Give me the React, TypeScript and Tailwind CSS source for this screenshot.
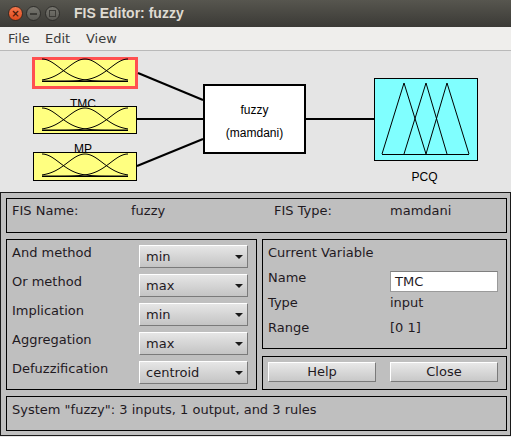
import React from "react";

const ink = "text-[#1f1a1f]";

// gaussian membership curves for an input box, x 42..128 in canvas coords
function mfPaths(top: number) {
  const base = top + 22;
  const centers = [42, 85, 128];
  const sigma = 17.5;
  return centers.map((c) => {
    let d = "";
    for (let x = 42; x <= 128; x++) {
      const y = base - 22 * Math.exp(-((x - c) ** 2) / (2 * sigma * sigma));
      d += `${x === 42 ? "M" : "L"}${x},${y.toFixed(2)} `;
    }
    return d;
  });
}

function Select({ value }: { value: string }) {
  return (
    <div className="h-[23px] w-[109px] flex items-center justify-between pl-[6px] pr-[4px] border border-t-white border-l-white border-b-[#7a7a7a] border-r-[#7a7a7a] bg-linear-to-b from-[#e6e6e6] to-[#c4c4c4]">
      <span>{value}</span>
      <span className="w-0 h-0 border-x-[4px] border-x-transparent border-t-[4px] border-t-[#1a1a1a]" />
    </div>
  );
}

function Button({ label }: { label: string }) {
  return (
    <div className="h-[20px] w-[108px] flex items-center justify-center border border-t-white border-l-white border-b-[#7a7a7a] border-r-[#7a7a7a] bg-linear-to-b from-[#e8e8e8] to-[#c8c8c8]">
      {label}
    </div>
  );
}

const methods: [string, string][] = [
  ["And method", "min"],
  ["Or method", "max"],
  ["Implication", "min"],
  ["Aggregation", "max"],
  ["Defuzzification", "centroid"],
];

export default function App() {
  const inputs = [8, 57, 103];

  return (
    <div className="w-[511px] h-[437px] overflow-hidden flex flex-col bg-[#e5e5e5]" style={{ fontFamily: "'DejaVu Sans', sans-serif" }}>
      {/* title bar */}
      <div className="h-[27px] flex items-center bg-linear-to-b from-[#57564f] to-[#3b3a36] pl-[8px]">
        <div className="w-[15px] h-[15px] rounded-full bg-linear-to-b from-[#f4774c] to-[#df4a1a] border border-[#3a2a22] flex items-center justify-center text-[10px] leading-none text-[#4a1a0a] font-bold">×</div>
        <div className="ml-[3px] w-[15px] h-[15px] rounded-full bg-linear-to-b from-[#77766f] to-[#5b5a55] border border-[#2f2e2b] flex items-center justify-center">
          <div className="w-[7px] h-[2px] bg-[#3c3b37]" />
        </div>
        <div className="ml-[4px] w-[15px] h-[15px] rounded-full bg-linear-to-b from-[#77766f] to-[#5b5a55] border border-[#2f2e2b] flex items-center justify-center">
          <div className="w-[7px] h-[7px] border-[1.5px] border-[#3c3b37]" />
        </div>
        <span className="ml-[14px] text-[14px] font-bold text-[#dfdbd2]" style={{ fontFamily: "'Liberation Sans', sans-serif" }}>
          FIS Editor: fuzzy
        </span>
      </div>

      {/* menu bar */}
      <div className="h-[24px] flex items-center pl-[8px] bg-[#efeeec] border-b border-[#b9b9b9] text-[13px] text-[#3c3c3c]">
        <span className="w-[37px]">File</span>
        <span className="w-[41px]">Edit</span>
        <span>View</span>
      </div>

      {/* diagram */}
      <div className="relative h-[141px] shrink-0" style={{ fontFamily: "'Liberation Sans', sans-serif" }}>
        <div className="absolute left-[33px] top-[46px] w-[100px] text-center text-[12px] leading-[14px] text-black">TMC</div>
        <div className="absolute left-[33px] top-[91px] w-[100px] text-center text-[12px] leading-[14px] text-black">MP</div>

        <div className="absolute left-[32px] top-[6px] w-[106px] h-[32px] bg-[#ffff80] border-[3px] border-[#ff5050]" />
        <div className="absolute left-[33px] top-[55px] w-[104px] h-[28px] bg-[#ffff80] border border-black" />
        <div className="absolute left-[33px] top-[101px] w-[104px] h-[29px] bg-[#ffff80] border border-black" />

        <div className="absolute left-[203px] top-[33px] w-[103px] h-[70px] bg-white border-2 border-black text-[12px] leading-[14px] text-black">
          <div className="absolute top-[17px] inset-x-0 text-center">fuzzy</div>
          <div className="absolute top-[40px] inset-x-0 text-center">(mamdani)</div>
        </div>

        <div className="absolute left-[374px] top-[27px] w-[104px] h-[83px] bg-[#80ffff] border border-black" />
        <div className="absolute left-[374px] top-[119px] w-[101px] text-center text-[12px] leading-[14px] text-black">PCQ</div>

        <svg className="absolute inset-0" width="511" height="141">
          <g stroke="black" strokeWidth="2" fill="none">
            <line x1="138" y1="22" x2="203" y2="49" />
            <line x1="137" y1="68" x2="203" y2="68" />
            <line x1="137" y1="115" x2="203" y2="88" />
            <line x1="306" y1="68" x2="374" y2="68" />
          </g>
          <g stroke="black" strokeWidth="1" fill="none">
            {inputs.map((t) => (
              <g key={t}>
                {mfPaths(t).map((d, i) => (
                  <path key={i} d={d} />
                ))}
                <line x1="42" y1={t + 22.5} x2="128" y2={t + 22.5} />
              </g>
            ))}
            <polyline points="382,103 404,32 426,103" />
            <polyline points="404,103 426,32 447,103" />
            <polyline points="426,103 447,32 469,103" />
            <line x1="382" y1="103.5" x2="469" y2="103.5" />
          </g>
        </svg>
      </div>

      {/* control panel */}
      <div className={`w-[511px] h-[244px] shrink-0 bg-[#bfbfbf] border border-[#1a1a1a] pt-[5px] pl-[5px] text-[13px] leading-[16px] ${ink}`}>
        <div className="w-[501px] h-[35px] border border-black pt-[4px] pl-[5px] flex">
          <span className="w-[119px]">FIS Name:</span>
          <span className="w-[143px]">fuzzy</span>
          <span className="w-[116px]">FIS Type:</span>
          <span>mamdani</span>
        </div>

        <div className="mt-[6px] flex gap-[5px]">
          <div className="w-[251px] h-[151px] border border-black pt-[5px] pl-[5px] flex flex-col gap-[6px]">
            {methods.map(([label, value]) => (
              <div key={label} className="flex items-start">
                <span className="w-[127px]">{label}</span>
                <Select value={value} />
              </div>
            ))}
          </div>

          <div className="flex flex-col gap-[7px]">
            <div className="w-[245px] h-[110px] border border-black pt-[5px] pl-[5px]">
              <div className="h-[25px]">Current Variable</div>
              <div className="h-[25px] flex items-start">
                <span className="w-[122px]">Name</span>
                <div className="mt-[1px] w-[108px] h-[21px] bg-white border border-[#9a9a9a] border-t-[#7f7f7f] flex items-center pl-[4px]">TMC</div>
              </div>
              <div className="h-[25px] flex">
                <span className="w-[122px]">Type</span>
                <span>input</span>
              </div>
              <div className="h-[25px] flex">
                <span className="w-[122px]">Range</span>
                <span>[0 1]</span>
              </div>
            </div>
            <div className="w-[245px] h-[34px] border border-black pt-[5px] pl-[5px] flex gap-[14px]">
              <Button label="Help" />
              <Button label="Close" />
            </div>
          </div>
        </div>

        <div className="mt-[6px] w-[501px] h-[35px] border border-black pt-[5px] pl-[5px]">
          System "fuzzy": 3 inputs, 1 output, and 3 rules
        </div>
      </div>
    </div>
  );
}
